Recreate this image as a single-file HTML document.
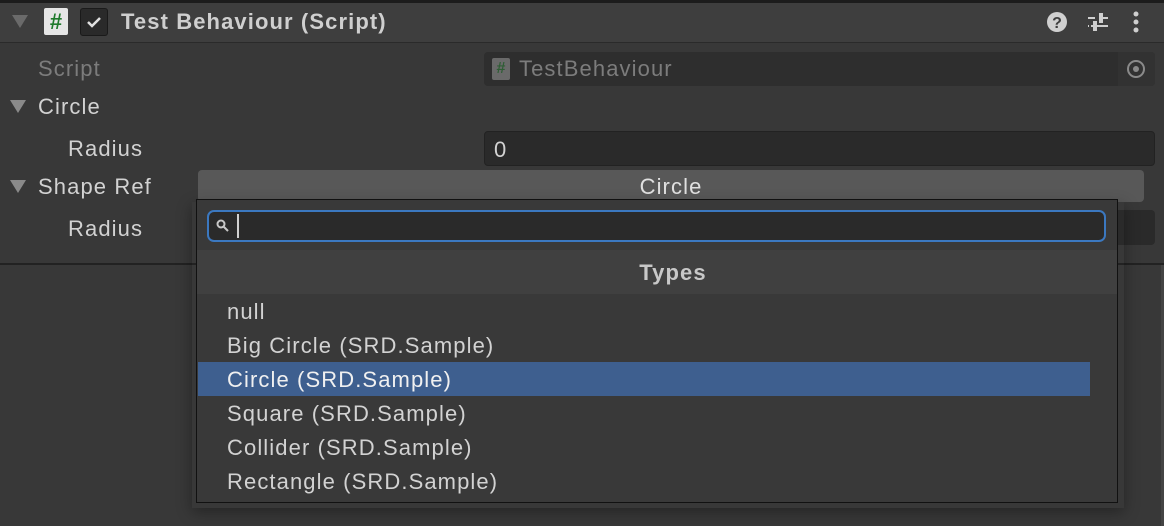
<!DOCTYPE html>
<html><head><style>
body{margin:0;width:1164px;height:526px;background:#383838;position:relative;overflow:hidden;font-family:"Liberation Sans",sans-serif;color:#d2d2d2}
.a{position:absolute}
.t{font-size:22px;line-height:26px;letter-spacing:1.1px}
</style></head><body>
<div class="a" style="left:0;top:0;width:1164px;height:3px;background:#1c1c1c"></div>
<div class="a" style="left:0;top:3px;width:1164px;height:39px;background:#3e3e3e"></div>
<div class="a" style="left:0;top:42px;width:1164px;height:1px;background:#2a2a2a"></div>
<div class="a" style="left:0;top:43px;width:1164px;height:220px;background:#383838"></div>
<div class="a" style="left:0;top:263px;width:1164px;height:2px;background:#222"></div>
<div class="a" style="left:1161px;top:265px;width:3px;height:261px;background:#444"></div>
<!-- header -->
<svg class="a" style="left:12px;top:15px" width="16" height="14"><path d="M0 0H16L8 13Z" fill="#6a6a6a"/></svg>
<div class="a" style="left:44px;top:8px;width:24px;height:27px;background:#e6e6e6;border-radius:2px;color:#1f7a2c;font-weight:bold;font-size:22px;text-align:center;line-height:28px">#</div>
<div class="a" style="left:80px;top:8px;width:26px;height:26px;background:#2a2a2a;border:1px solid #1a1a1a;border-radius:3px"></div>
<svg class="a" style="left:84px;top:12px" width="20" height="20"><path d="M4 10L8 14L16 6" stroke="#e0e0e0" stroke-width="2.5" fill="none"/></svg>
<div class="a t" style="left:121px;top:9px;font-weight:bold;color:#cfcfcf">Test Behaviour (Script)</div>
<svg class="a" style="left:1046px;top:11px" width="22" height="22"><circle cx="11" cy="11" r="10" fill="#d0d0d0"/><text x="11" y="17" font-size="16" font-weight="bold" text-anchor="middle" fill="#3e3e3e" font-family="Liberation Sans">?</text></svg>
<svg class="a" style="left:1086px;top:11px" width="24" height="22"><path d="M2 7H22M2 15H22" stroke="#cfcfcf" stroke-width="2"/><rect x="13" y="2" width="4" height="10" fill="#cfcfcf"/><rect x="7" y="10" width="4" height="10" fill="#cfcfcf"/><rect x="9" y="6" width="4" height="2" fill="#3e3e3e"/><rect x="3" y="14" width="2" height="2" fill="#3e3e3e"/></svg>
<svg class="a" style="left:1130px;top:10px" width="12" height="24"><circle cx="6" cy="4" r="2.5" fill="#cfcfcf"/><circle cx="6" cy="12" r="2.5" fill="#cfcfcf"/><circle cx="6" cy="20" r="2.5" fill="#cfcfcf"/></svg>
<!-- rows -->
<div class="a t" style="left:38px;top:56px;color:#7c7c7c">Script</div>
<div class="a" style="left:484px;top:52px;width:671px;height:34px;background:#2e2e2e;border-radius:4px"></div>
<div class="a" style="left:1118px;top:52px;width:37px;height:34px;background:#323232;border-radius:0 4px 4px 0"></div>
<div class="a" style="left:492px;top:58px;width:18px;height:22px;background:#6a6a6a;border-radius:2px;color:#2e5d34;font-size:16px;font-weight:bold;text-align:center;line-height:22px">#</div>
<div class="a t" style="left:519px;top:56px;color:#7c7c7c">TestBehaviour</div>
<svg class="a" style="left:1125px;top:58px" width="22" height="22"><circle cx="11" cy="11" r="8" stroke="#8a8a8a" stroke-width="2" fill="none"/><circle cx="11" cy="11" r="3" fill="#8a8a8a"/></svg>
<svg class="a" style="left:10px;top:100px" width="16" height="14"><path d="M0 0H16L8 13Z" fill="#8a8a8a"/></svg>
<div class="a t" style="left:38px;top:94px">Circle</div>
<div class="a t" style="left:68px;top:136px">Radius</div>
<div class="a" style="left:484px;top:131px;width:671px;height:35px;background:#2a2a2a;border-radius:4px;border:1px solid #222;box-sizing:border-box"></div>
<div class="a t" style="left:494px;top:137px">0</div>
<svg class="a" style="left:10px;top:180px" width="16" height="14"><path d="M0 0H16L8 13Z" fill="#8a8a8a"/></svg>
<div class="a t" style="left:38px;top:174px">Shape Ref</div>
<div class="a" style="left:198px;top:170px;width:946px;height:32px;background:#585858;border-radius:4px;text-align:center;font-size:22px;line-height:33px;color:#e0e0e0;letter-spacing:1.1px">Circle</div>
<div class="a t" style="left:68px;top:216px">Radius</div>
<div class="a" style="left:1100px;top:210px;width:55px;height:35px;background:#2a2a2a;border-radius:4px"></div>
<!-- popup -->
<div class="a" style="left:192px;top:202px;width:932px;height:306px;box-shadow:0 4px 14px rgba(0,0,0,.35)"></div>
<div class="a" style="left:196px;top:199px;width:922px;height:304px;background:#393939;border:1px solid #111;box-sizing:border-box"></div>
<div class="a" style="left:197px;top:200px;width:920px;height:49px;background:#393939"></div>
<div class="a" style="left:207px;top:210px;width:899px;height:32px;background:#2a2a2a;border:2px solid #3b78c0;border-radius:7px;box-sizing:border-box"></div>
<svg class="a" style="left:215px;top:218px" width="16" height="16"><circle cx="6" cy="6" r="3.5" stroke="#c8c8c8" stroke-width="2" fill="none"/><path d="M8.5 8.5L13 13" stroke="#c8c8c8" stroke-width="2"/></svg>
<div class="a" style="left:237px;top:214px;width:2px;height:24px;background:#d0d0d0"></div>
<div class="a" style="left:197px;top:250px;width:920px;height:44px;background:#404040"></div>
<div class="a t" style="left:197px;top:260px;width:952px;text-align:center;font-weight:bold;color:#c8c8c8">Types</div>
<div class="a" style="left:198px;top:362px;width:892px;height:34px;background:#3e5f8f"></div>
<div class="a t" style="left:227px;top:299px">null</div>
<div class="a t" style="left:227px;top:333px">Big Circle (SRD.Sample)</div>
<div class="a t" style="left:227px;top:367px;color:#f0f0f0">Circle (SRD.Sample)</div>
<div class="a t" style="left:227px;top:401px">Square (SRD.Sample)</div>
<div class="a t" style="left:227px;top:435px">Collider (SRD.Sample)</div>
<div class="a t" style="left:227px;top:469px">Rectangle (SRD.Sample)</div>
</body></html>
